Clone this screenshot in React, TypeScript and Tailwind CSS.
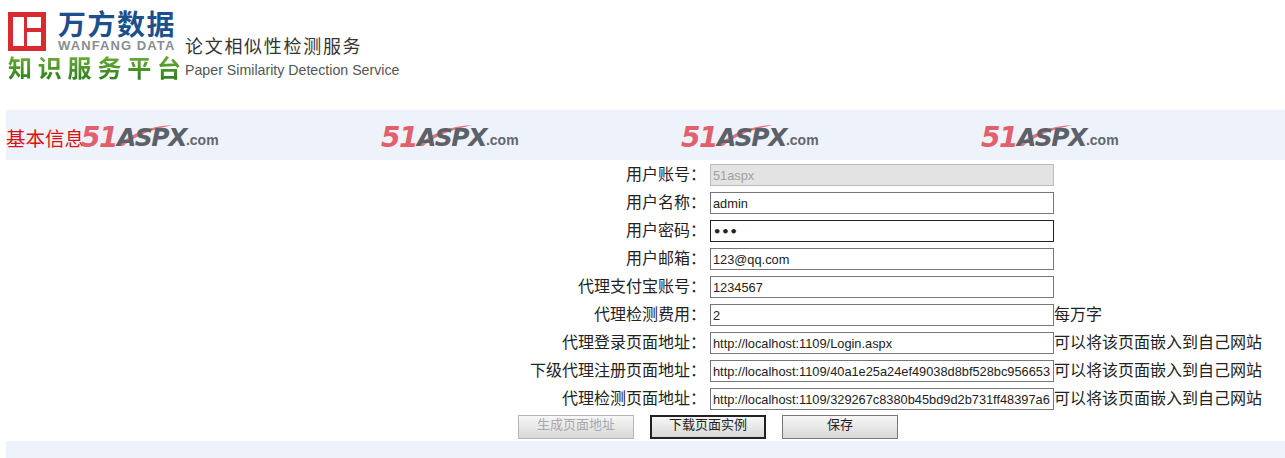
const ROWS = [
  { label: '用户账号：', value: '51aspx', disabled: true },
  { label: '用户名称：', value: 'admin' },
  { label: '用户密码：', value: '123', password: true, focused: true },
  { label: '用户邮箱：', value: '123@qq.com' },
  { label: '代理支付宝账号：', value: '1234567' },
  { label: '代理检测费用：', value: '2', note: '每万字' },
  { label: '代理登录页面地址：', value: 'http://localhost:1109/Login.aspx', note: '可以将该页面嵌入到自己网站' },
  { label: '下级代理注册页面地址：', value: 'http://localhost:1109/40a1e25a24ef49038d8bf528bc956653', note: '可以将该页面嵌入到自己网站' },
  { label: '代理检测页面地址：', value: 'http://localhost:1109/329267c8380b45bd9d2b731ff48397a6', note: '可以将该页面嵌入到自己网站' },
]

const CJK = "font-['Liberation_Sans','Noto_Sans_CJK_SC',sans-serif]"

function LogoMark() {
  return (
    <svg width="38" height="39" viewBox="0 0 38 39" className="shrink-0">
      <rect width="38" height="39" fill="#d92b2f" />
      <rect x="5" y="5" width="11" height="29" fill="#fff" />
      <rect x="19" y="5" width="14" height="11" fill="#fff" />
      <rect x="19" y="20" width="14" height="14" fill="#fff" />
    </svg>
  )
}

function Watermark() {
  return (
    <div className="relative w-[137px] h-[28px] flex items-end whitespace-nowrap font-['DejaVu_Sans',sans-serif] italic">
      <svg width="60" height="24" viewBox="0 0 60 24" className="absolute left-[36px] top-0">
        <path d="M0 22 C14 10 32 2 56 1 C36 5 18 12 6 22 Z" fill="#e0737d" />
      </svg>
      <span className="relative text-[28px] leading-[28px] font-bold text-[#e2606c] tracking-[-1.5px]">51</span>
      <span className="relative text-[25px] leading-[28px] font-bold text-[#5c6068] tracking-[-1.5px]">ASPX</span>
      <span className="relative not-italic font-['Liberation_Sans',sans-serif] text-[14px] leading-[24px] font-bold text-[#62666e]">.com</span>
    </div>
  )
}

function Button({ label, disabled, active }: { label: string; disabled?: boolean; active?: boolean }) {
  return (
    <button
      disabled={disabled}
      className={`w-[116px] h-[24px] pb-[6px] text-[13px] leading-none bg-linear-to-b from-[#f7f7f7] to-[#d8d8d8] ${CJK} ${
        disabled
          ? 'border border-[#b5b5b5] text-[#a8a8a8]'
          : active
            ? 'border-2 border-[#222] text-[#222]'
            : 'border border-[#777] text-[#222]'
      }`}
    >
      {label}
    </button>
  )
}

export default function App() {
  return (
    <div className={`w-[1285px] h-[458px] overflow-hidden bg-white text-[#222] ${CJK}`}>
      <div className="h-[110px] pl-2 pt-3 flex items-start">
        <div className="w-[177px] shrink-0">
          <div className="flex gap-3">
            <LogoMark />
            <div>
              <div className="text-[28px] leading-[28px] font-bold text-[#1c4f8c] whitespace-nowrap tracking-[1.5px]">万方数据</div>
              <div className="text-[13px] leading-[11px] font-bold text-[#8a8d92] whitespace-nowrap tracking-[1.1px]">WANFANG DATA</div>
            </div>
          </div>
          <div className="mt-1 text-[24px] leading-[28px] font-bold tracking-[5.8px] whitespace-nowrap bg-linear-to-b from-[#6fae3a] to-[#1f7a16] bg-clip-text text-transparent">知识服务平台</div>
        </div>
        <div className="pt-[23px]">
          <div className="text-[18px] leading-[24px] tracking-[1.7px] text-[#333] whitespace-nowrap">论文相似性检测服务</div>
          <div className="mt-[2px] text-[14.2px] leading-[18px] text-[#555] whitespace-nowrap">Paper Similarity Detection Service</div>
        </div>
      </div>

      <div className="ml-1.5 h-[50px] pt-1.5 bg-[#eef2fa] flex items-center">
        <div className="w-[75px] mt-[3px] text-[19.5px] text-[#e01010] whitespace-nowrap">基本信息</div>
        <div className="flex">
          <div className="w-[300px]"><Watermark /></div>
          <div className="w-[300px]"><Watermark /></div>
          <div className="w-[300px]"><Watermark /></div>
          <div className="w-[300px]"><Watermark /></div>
        </div>
      </div>

      <div className="pt-1 flex flex-col gap-1.5">
        {ROWS.map(row => (
          <div key={row.label} className="flex items-center h-[22px]">
            <div className="w-[706px] text-right text-[16px] leading-[22px] text-[#222] whitespace-nowrap">{row.label}</div>
            <input
              readOnly
              disabled={row.disabled}
              type={row.password ? 'password' : 'text'}
              value={row.value}
              className={`ml-1 w-[344px] h-[22px] px-[2px] outline-none border ${
                row.password ? "text-[13px] font-bold font-['DejaVu_Sans',sans-serif]" : "text-[12.8px] font-['Liberation_Sans',sans-serif]"
              } ${
                row.disabled
                  ? 'bg-[#e3e3e3] border-[#bbb] text-[#a0a0a0]'
                  : row.focused
                    ? 'border-[#222] text-[#222]'
                    : 'border-[#777] text-[#222]'
              }`}
            />
            {row.note && <span className="text-[16px] leading-[22px] text-[#222] whitespace-nowrap">{row.note}</span>}
          </div>
        ))}
      </div>

      <div className="mt-[5px] pl-[518px] flex gap-4">
        <Button label="生成页面地址" disabled />
        <Button label="下载页面实例" active />
        <Button label="保存" />
      </div>

      <div className="mt-[2px] ml-1.5 h-[40px] bg-[#eef2fa]" />
    </div>
  )
}
